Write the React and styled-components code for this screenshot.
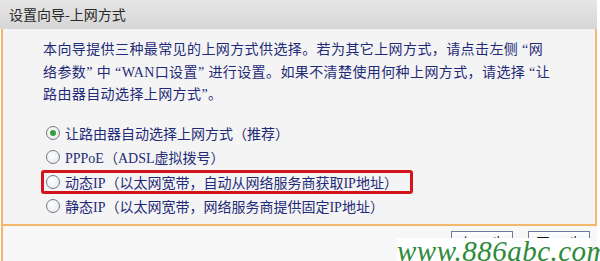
import React from 'react'
import styled, { createGlobalStyle } from 'styled-components'

const GlobalStyle = createGlobalStyle`
  html, body {
    margin: 0;
    padding: 0;
    background: #ffffff;
  }
`

const options = [
  { label: '让路由器自动选择上网方式（推荐）', checked: true },
  { label: 'PPPoE（ADSL虚拟拨号）' },
  { label: '动态IP（以太网宽带，自动从网络服务商获取IP地址）', marked: true },
  { label: '静态IP（以太网宽带，网络服务商提供固定IP地址）' },
]

function App() {
  return (
    <>
      <GlobalStyle />
      <Page>
        <Window>
          <TitleBar>设置向导-上网方式</TitleBar>
          <Body>
            <Intro>
              本向导提供三种最常见的上网方式供选择。若为其它上网方式，请点击左侧 “网络参数” 中 “WAN口设置” 进行设置。如果不清楚使用何种上网方式，请选择 “让路由器自动选择上网方式”。
            </Intro>
            <OptionList>
              {options.map((o) => (
                <Option key={o.label} marked={o.marked}>
                  <Radio checked={o.checked} />
                  <span>{o.label}</span>
                </Option>
              ))}
            </OptionList>
          </Body>
          <Footer>
            <Button>上 一 步</Button>
            <Button>下 一 步</Button>
          </Footer>
        </Window>
        <Watermark>www.886abc.com</Watermark>
      </Page>
    </>
  )
}

export default App

const Page = styled.div`
  position: relative;
  width: 600px;
  height: 261px;
  overflow: hidden;
  background: #fff;
`

const Window = styled.div`
  width: 597px;
  height: 261px;
  display: flex;
  flex-direction: column;
`

const TitleBar = styled.div`
  height: 29px;
  line-height: 29px;
  padding-left: 9px;
  background: linear-gradient(#e6e6e6, #d6d6d6);
  color: #2a2a2a;
  font-family: "Noto Sans CJK SC", sans-serif;
  font-size: 14px;
`

const Body = styled.div`
  height: 197px;
  box-sizing: border-box;
  margin-left: 1px;
  border-left: 2px solid #f2b86c;
  border-right: 2px solid #f2b86c;
  border-bottom: 2px solid #f2b86c;
  background: #f4f4f4;
  padding: 10px 40px 0 40px;
  color: #1f2b78;
  font-family: "Liberation Serif", "Noto Sans CJK SC", serif;
  font-size: 14px;
`

const Intro = styled.p`
  margin: 0;
  line-height: 22.5px;
  letter-spacing: 0.4px;
`

const OptionList = styled.div`
  margin-top: 14px;
  margin-left: 3px;
  display: flex;
  flex-direction: column;
`

const Option = styled.div`
  display: flex;
  align-items: center;
  gap: 5px;
  height: 24.5px;
  align-self: flex-start;
  box-sizing: border-box;
  margin-left: ${(p) => (p.marked ? '-5px' : '0')};
  padding: ${(p) => (p.marked ? '0 12px 0 2px' : '0')};
  border: ${(p) => (p.marked ? '3px solid #d3141c' : 'none')};
  border-radius: 3px;
  white-space: nowrap;
`

const Radio = styled.span`
  position: relative;
  width: 12px;
  height: 12px;
  border-radius: 50%;
  border: 1px solid #6f7a86;
  background: radial-gradient(circle at 40% 40%, #ffffff, #e3e6ea);
  flex: none;

  &::after {
    content: '';
    display: ${(p) => (p.checked ? 'block' : 'none')};
    position: absolute;
    left: 3px;
    top: 3px;
    width: 6px;
    height: 6px;
    border-radius: 50%;
    background: #34a03c;
  }
`

const Footer = styled.div`
  flex: 1;
  margin-left: 1px;
  border-left: 2px solid #f2b86c;
  background: #f7f7f7;
  display: flex;
  justify-content: flex-end;
  align-items: flex-start;
  gap: 15px;
  padding: 5px 7px 0 0;
`

const Button = styled.button`
  width: 62px;
  height: 22px;
  padding: 0;
  border: 1px solid #6c7c98;
  background: linear-gradient(#ffffff, #dfe6f0);
  color: #111;
  font-family: "Noto Sans CJK SC", sans-serif;
  font-size: 13px;
  line-height: 20px;
`

const Watermark = styled.div`
  position: absolute;
  left: 397px;
  top: 238px;
  width: 193px;
  height: 23px;
  background: #fff;
  color: #2f8a3c;
  font-family: "Liberation Serif", serif;
  font-style: italic;
  font-size: 29px;
  line-height: 26px;
  text-align: center;
  letter-spacing: 0.5px;
`
